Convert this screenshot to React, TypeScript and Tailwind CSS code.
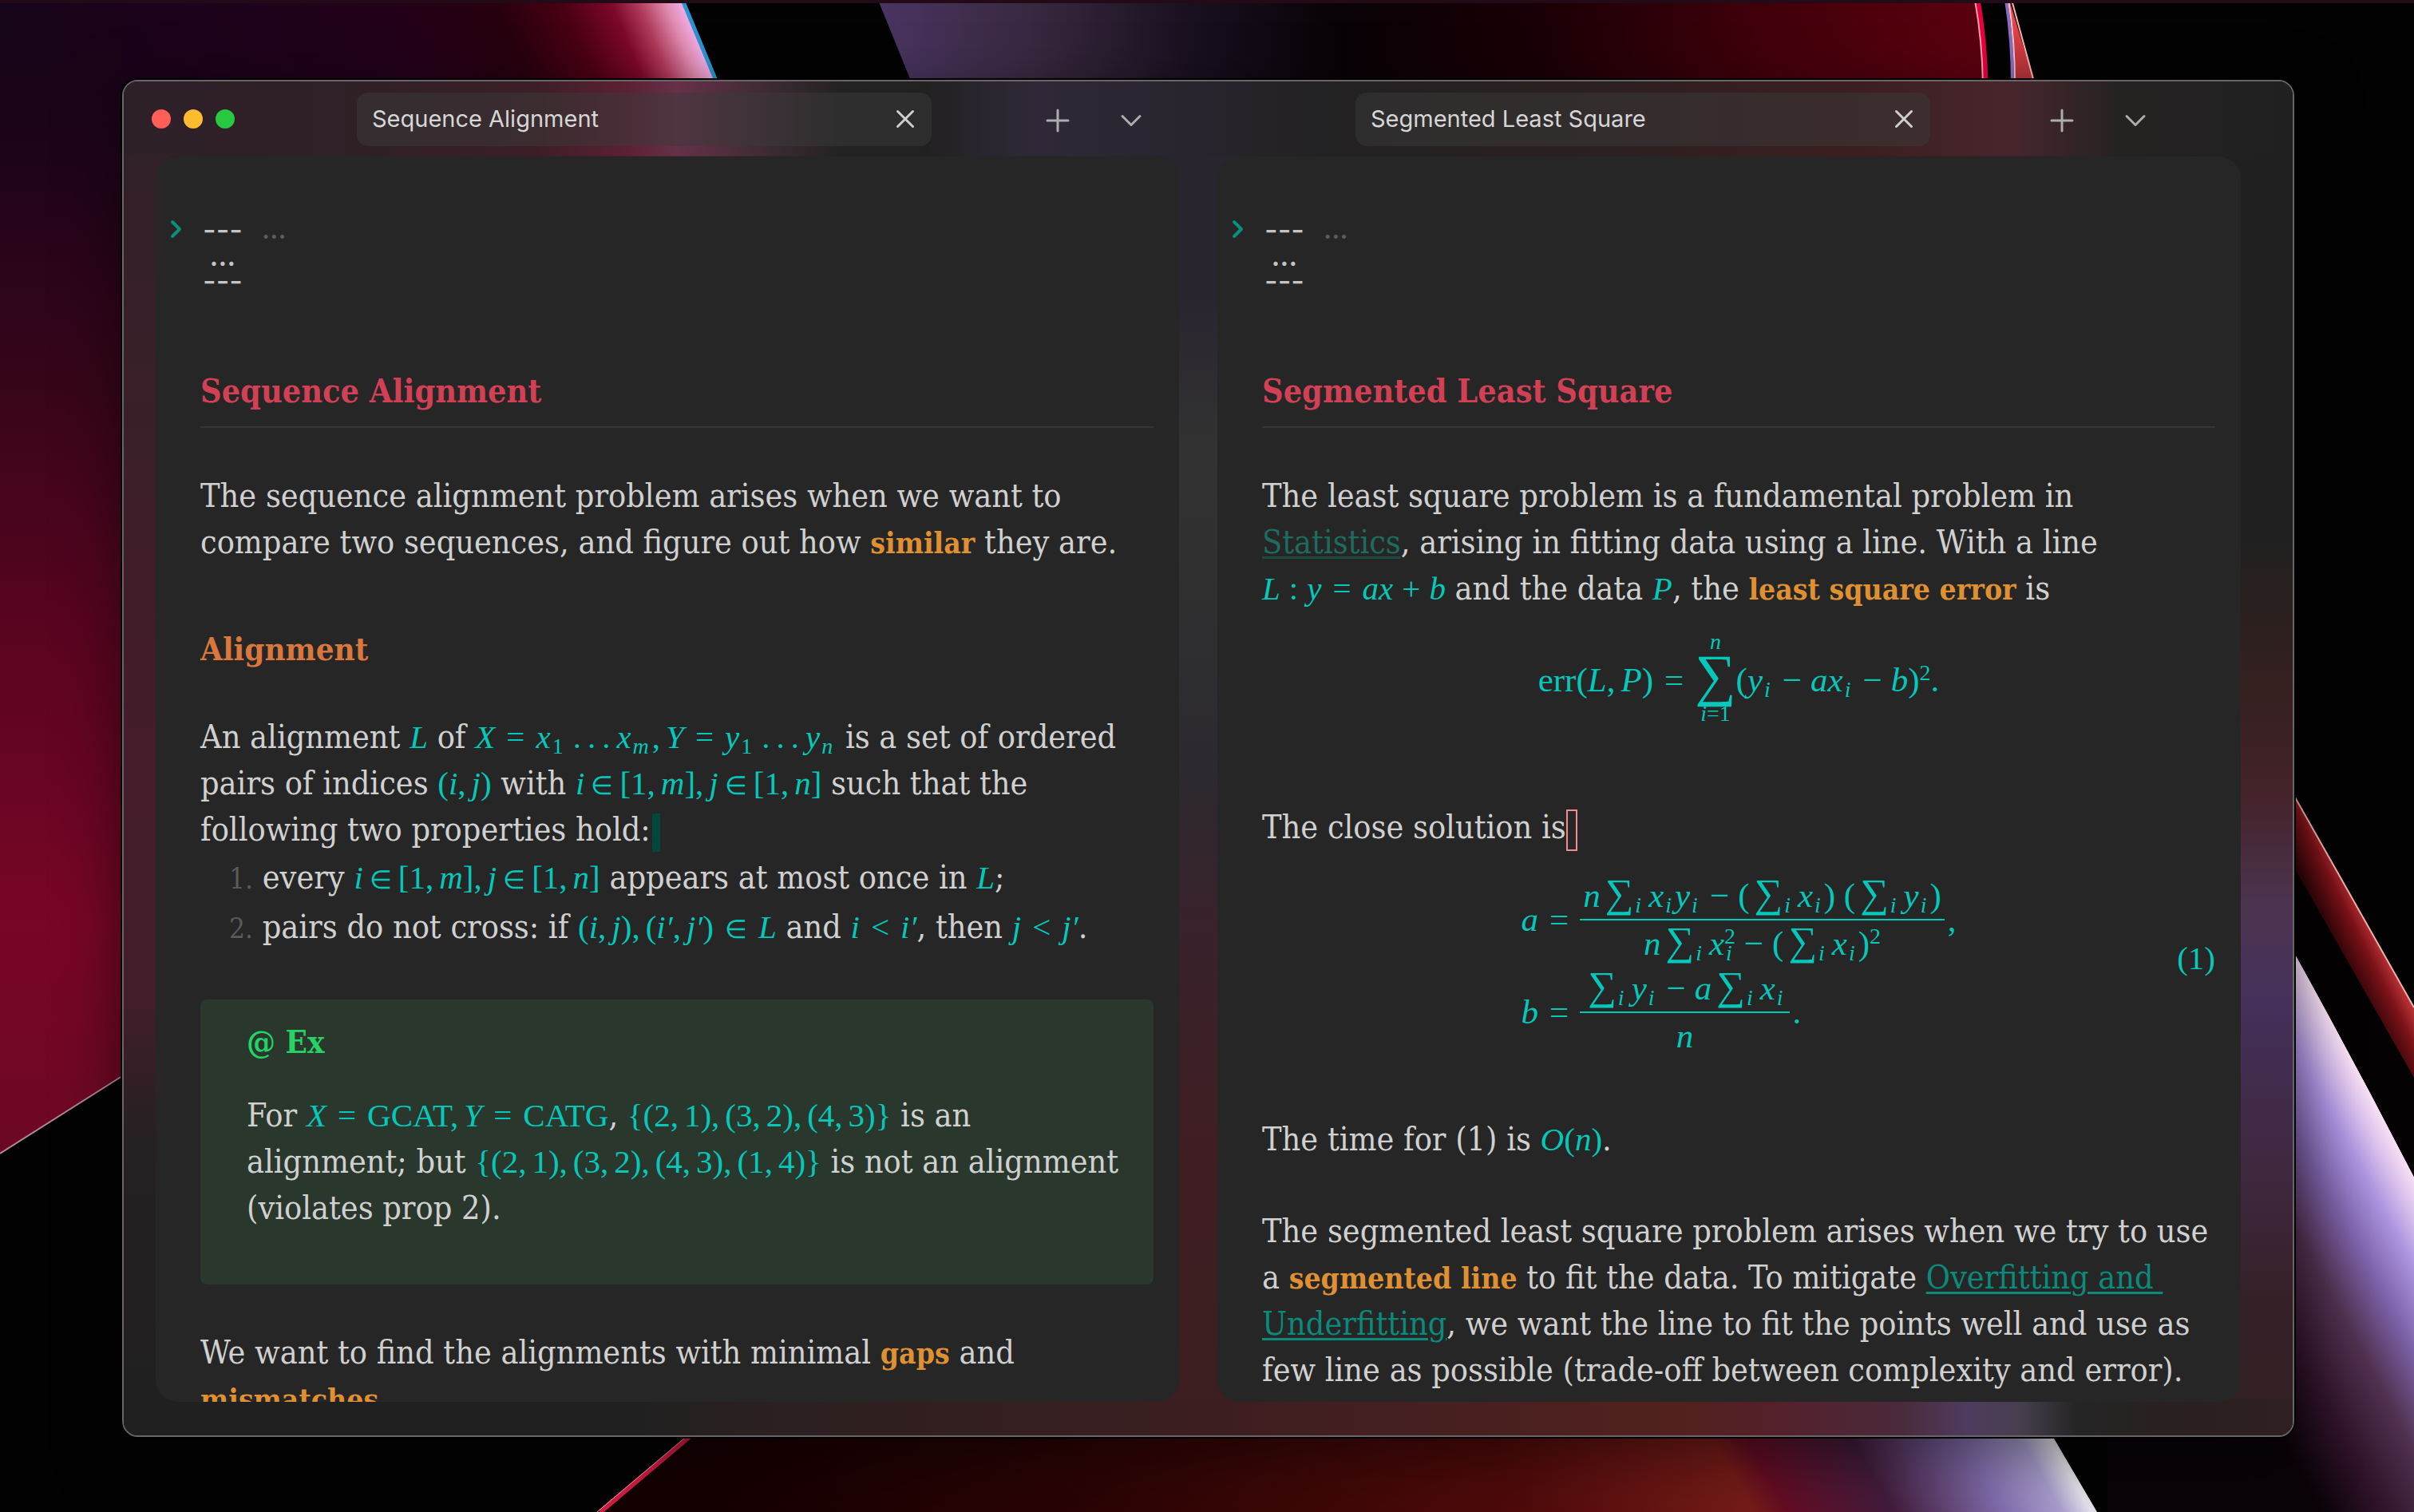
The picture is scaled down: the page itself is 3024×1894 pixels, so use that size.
import type { ReactNode } from "react";

type Children = { children: ReactNode };

/* ---------- desktop wallpaper ---------- */

function Wallpaper() {
  return (
    <svg className="absolute inset-0 h-full w-full" viewBox="0 0 3024 1894" preserveAspectRatio="none" aria-hidden="true">
      <defs>
        <linearGradient id="petal" gradientUnits="userSpaceOnUse" x1="0" y1="0" x2="858" y2="0" gradientTransform="skewX(22.8)">
          <stop offset="0" stopColor="#16041a" />
          <stop offset="0.55" stopColor="#22001a" />
          <stop offset="0.72" stopColor="#26000e" />
          <stop offset="0.82" stopColor="#4a0014" />
          <stop offset="0.89" stopColor="#7c0828" />
          <stop offset="0.93" stopColor="#b03a5c" />
          <stop offset="0.97" stopColor="#e08cb0" />
          <stop offset="1" stopColor="#f4b4f4" />
        </linearGradient>
        <linearGradient id="leftEdge" gradientUnits="userSpaceOnUse" x1="0" y1="0" x2="0" y2="1445">
          <stop offset="0" stopColor="#16040f" stopOpacity="0" />
          <stop offset="0.16" stopColor="#22041a" />
          <stop offset="0.34" stopColor="#38051a" />
          <stop offset="0.55" stopColor="#5a0420" />
          <stop offset="0.8" stopColor="#780626" />
          <stop offset="1" stopColor="#6c0824" />
        </linearGradient>
        <linearGradient id="topSheet" gradientUnits="userSpaceOnUse" x1="1100" y1="0" x2="2484" y2="0">
          <stop offset="0" stopColor="#4a3462" />
          <stop offset="0.14" stopColor="#38283f" />
          <stop offset="0.28" stopColor="#191020" />
          <stop offset="0.42" stopColor="#080206" />
          <stop offset="0.6" stopColor="#1a0006" />
          <stop offset="0.8" stopColor="#40000a" />
          <stop offset="1" stopColor="#5a000e" />
        </linearGradient>
        <linearGradient id="wedge" gradientUnits="userSpaceOnUse" x1="0" y1="0" x2="0" y2="106">
          <stop offset="0" stopColor="#ff4a4a" />
          <stop offset="1" stopColor="#a83038" />
        </linearGradient>
        <linearGradient id="bottomSheet" gradientUnits="userSpaceOnUse" x1="800" y1="0" x2="2560" y2="0" gradientTransform="translate(-1034 0) skewX(30)">
          <stop offset="0" stopColor="#140002" />
          <stop offset="0.3" stopColor="#2c0404" />
          <stop offset="0.6" stopColor="#500a0a" />
          <stop offset="0.76" stopColor="#761c18" />
          <stop offset="0.785" stopColor="#640c24" />
          <stop offset="0.86" stopColor="#421c3c" />
          <stop offset="0.94" stopColor="#8470b0" />
          <stop offset="0.98" stopColor="#aca0d0" />
          <stop offset="1" stopColor="#e8e4ee" />
        </linearGradient>
        <linearGradient id="rightSheet" gradientUnits="userSpaceOnUse" x1="2683" y1="1471" x2="2947" y2="1330">
          <stop offset="0" stopColor="#0a0308" />
          <stop offset="0.22" stopColor="#2e1228" />
          <stop offset="0.46" stopColor="#50304e" />
          <stop offset="0.65" stopColor="#7a60a6" />
          <stop offset="0.82" stopColor="#ac94e0" />
          <stop offset="0.92" stopColor="#d8c0ec" />
          <stop offset="1" stopColor="#f8e0f4" />
        </linearGradient>
        <linearGradient id="redBand" gradientUnits="userSpaceOnUse" x1="2890" y1="1130" x2="2960" y2="1095">
          <stop offset="0" stopColor="#1c0204" />
          <stop offset="0.5" stopColor="#7a1218" />
          <stop offset="0.9" stopColor="#dc4448" />
          <stop offset="1" stopColor="#f49a94" />
        </linearGradient>
      </defs>
      <rect width="3024" height="1894" fill="#020202" />
      <path d="M0 0H855L899 106H153V1348L0 1445Z" fill="url(#petal)" />
      <path d="M0 0H153V1348L0 1445Z" fill="url(#leftEdge)" />
      <path d="M153 1348L0 1445" stroke="#b08a98" strokeWidth="2" />
      <path d="M855 0L899 106" stroke="#2a94d0" strokeWidth="5" />
      <path d="M1100 0H2474Q2483 50 2484 106H1143Z" fill="url(#topSheet)" />
      <path d="M2477 0Q2486 50 2487 106" stroke="#e8003c" strokeWidth="7" fill="none" />
      <path d="M2474 0Q2483 50 2484 106" stroke="#f6a0b4" strokeWidth="2" fill="none" />
      <path d="M2517 0L2549 106H2524Q2524 50 2515 0Z" fill="url(#wedge)" />
      <path d="M2520 0L2549 106" stroke="#f8b4ac" strokeWidth="2" />
      <path d="M2513 0Q2521 50 2521 106" stroke="#8a6cc0" strokeWidth="4" fill="none" />
      <path d="M2516 0Q2524 50 2524 106" stroke="#f0c4d4" strokeWidth="2" fill="none" />
      <path d="M2870 1186Q2950 1330 3024 1474V1894H2640V1790H2870Z" fill="url(#rightSheet)" />
      <path d="M870 1790L750 1894H2627L2566 1790Z" fill="url(#bottomSheet)" />
      <path d="M868 1796L752 1894" stroke="#d81c44" strokeWidth="6" />
      <path d="M864 1796L748 1894" stroke="#f0a0b4" strokeWidth="1" />
      <path d="M2870 990L3024 1262V1380L2870 1100Z" fill="url(#redBand)" />
      <path d="M2870 1080L3024 1350V1474Q2950 1330 2870 1186Z" fill="#040202" />
      <path d="M2870 990L3024 1262" stroke="#f0b0ac" strokeWidth="2" />
      <rect width="3024" height="4" fill="#220a16" />
    </svg>
  );
}

/* Frosted glass of the window frame, seen round the panes. */
function Glass() {
  return (
    <svg className="absolute inset-0 h-full w-full" viewBox="0 0 2720 1700" preserveAspectRatio="none" aria-hidden="true">
      <defs>
        <linearGradient id="glassTop" x1="0" y1="0" x2="1" y2="0">
          <stop offset="0" stopColor="#2e2029" />
          <stop offset="0.12" stopColor="#302026" />
          <stop offset="0.19" stopColor="#3c1e26" />
          <stop offset="0.232" stopColor="#5c2033" />
          <stop offset="0.255" stopColor="#663048" />
          <stop offset="0.29" stopColor="#432c38" />
          <stop offset="0.33" stopColor="#232222" />
          <stop offset="0.37" stopColor="#222122" />
          <stop offset="0.42" stopColor="#302838" />
          <stop offset="0.49" stopColor="#28252e" />
          <stop offset="0.56" stopColor="#222122" />
          <stop offset="0.68" stopColor="#2c2020" />
          <stop offset="0.8" stopColor="#3c1e20" />
          <stop offset="0.87" stopColor="#46262c" />
          <stop offset="0.92" stopColor="#252222" />
          <stop offset="1" stopColor="#202020" />
        </linearGradient>
        <linearGradient id="glassBottom" x1="0" y1="0" x2="1" y2="0">
          <stop offset="0" stopColor="#202020" />
          <stop offset="0.24" stopColor="#212020" />
          <stop offset="0.3" stopColor="#2c2020" />
          <stop offset="0.5" stopColor="#3c1e20" />
          <stop offset="0.72" stopColor="#52211f" />
          <stop offset="0.76" stopColor="#55202a" />
          <stop offset="0.82" stopColor="#4a2a3c" />
          <stop offset="0.85" stopColor="#4e3c5e" />
          <stop offset="0.875" stopColor="#463e4e" />
          <stop offset="0.9" stopColor="#252525" />
          <stop offset="0.95" stopColor="#2a2020" />
          <stop offset="1" stopColor="#302022" />
        </linearGradient>
        <linearGradient id="glassLeft" x1="0" y1="0" x2="0" y2="1">
          <stop offset="0" stopColor="#2e2029" />
          <stop offset="0.25" stopColor="#3a1f28" />
          <stop offset="0.5" stopColor="#451c2a" />
          <stop offset="0.68" stopColor="#421e2a" />
          <stop offset="0.78" stopColor="#252021" />
          <stop offset="1" stopColor="#202020" />
        </linearGradient>
        <linearGradient id="glassMiddle" x1="0" y1="0" x2="0" y2="1">
          <stop offset="0" stopColor="#28252e" />
          <stop offset="0.16" stopColor="#29252f" />
          <stop offset="0.27" stopColor="#323232" />
          <stop offset="0.36" stopColor="#303030" />
          <stop offset="0.5" stopColor="#2c2a30" />
          <stop offset="0.62" stopColor="#38222c" />
          <stop offset="0.78" stopColor="#3e1e22" />
          <stop offset="1" stopColor="#3c1e20" />
        </linearGradient>
        <linearGradient id="glassRight" x1="0" y1="0" x2="0" y2="1">
          <stop offset="0" stopColor="#202020" />
          <stop offset="0.34" stopColor="#212020" />
          <stop offset="0.45" stopColor="#35201f" />
          <stop offset="0.53" stopColor="#44232a" />
          <stop offset="0.61" stopColor="#4c3450" />
          <stop offset="0.68" stopColor="#44305a" />
          <stop offset="0.8" stopColor="#402840" />
          <stop offset="0.9" stopColor="#352028" />
          <stop offset="1" stopColor="#302022" />
        </linearGradient>
      </defs>
      <rect width="2720" height="1700" fill="#202020" />
      <rect width="60" height="1700" fill="url(#glassLeft)" />
      <rect x="1300" width="100" height="1700" fill="url(#glassMiddle)" />
      <rect x="2600" width="120" height="1700" fill="url(#glassRight)" />
      <rect y="1654" width="2720" height="46" fill="url(#glassBottom)" />
      <rect width="2720" height="94" fill="url(#glassTop)" />
    </svg>
  );
}

/* ---------- window chrome ---------- */

function Tab({ title }: { title: string }) {
  return (
    <div className="flex h-[67px] min-w-0 flex-1 items-center justify-between rounded-[14px] bg-[#3a3a3a]/50 pr-3 pl-[19px]">
      <span className="truncate text-[29px] leading-10 text-[#d6d6d6]">{title}</span>
      <button type="button" aria-label={`Close ${title}`} className="flex size-[42px] items-center justify-center text-[#cfcfcf]">
        <svg className="size-6" viewBox="0 0 24 24" fill="none" stroke="currentColor" strokeWidth="3" strokeLinecap="round">
          <path d="M2.500 2.500L21.500 21.500M21.500 2.500L2.500 21.500" />
        </svg>
      </button>
    </div>
  );
}

function TabActions() {
  return (
    <div className="flex items-center gap-[44px] pt-1 text-[#adadad]">
      <button type="button" aria-label="New tab" className="flex size-12 items-center justify-center">
        <svg className="size-[30px]" viewBox="0 0 30 30" fill="none" stroke="currentColor" strokeWidth="3" strokeLinecap="round">
          <path d="M15 2V28M2 15H28" />
        </svg>
      </button>
      <button type="button" aria-label="Tab list" className="flex size-12 items-center justify-center">
        <svg className="h-4 w-7" viewBox="0 0 28 16" fill="none" stroke="currentColor" strokeWidth="3" strokeLinecap="round" strokeLinejoin="round">
          <path d="M3 2.500L14 13.500L25 2.500" />
        </svg>
      </button>
    </div>
  );
}

/* ---------- note building blocks ---------- */

function Fold() {
  return (
    <div className="-ml-[38px] flex h-[190px] items-start">
      <button type="button" aria-label="Unfold properties" className="mt-[7px] mr-[25px] text-[#0a8f7e]">
        <svg className="h-6 w-4" viewBox="0 0 16 24" fill="none" stroke="currentColor" strokeWidth="4" strokeLinecap="round" strokeLinejoin="round">
          <path d="M3 3L12 12L3 21" />
        </svg>
      </button>
      <pre className="mt-1 text-center font-[Inter] text-[36px] leading-8 font-medium text-[#c4c4c4]">{"---\n…\n---"}</pre>
      <span className="mt-1 ml-[24px] font-[Inter] text-[32px] leading-8 font-semibold text-[#5c5c5c]">…</span>
    </div>
  );
}

function Title({ children }: Children) {
  return (
    <h1 className="border-b-2 border-[#363636] pb-[12px] text-[41px] leading-[64px] font-bold text-[#d24055]">{children}</h1>
  );
}

function Strong({ children }: Children) {
  return <strong className="text-[37px] leading-none font-bold text-[#df9033]">{children}</strong>;
}

function M({ children }: Children) {
  return (
    <span className="font-['Liberation_Serif'] text-[41px] leading-none whitespace-nowrap text-[#05c8bb] italic">{children}</span>
  );
}

function DisplayM({ children }: Children) {
  return (
    <div className="font-['Liberation_Serif'] text-[43px] whitespace-nowrap text-[#05c8bb] italic">{children}</div>
  );
}

function Up({ children }: Children) {
  return <span className="not-italic">{children}</span>;
}

function Rel({ children }: Children) {
  return <span className="mx-[14px] not-italic">{children}</span>;
}

function In() {
  return <span className="mx-[8px] text-[32px] not-italic">∈</span>;
}

function Bin({ children }: Children) {
  return <span className="mx-[11px] not-italic">{children}</span>;
}

function Comma() {
  return <span className="mr-[7px] not-italic">,</span>;
}

function Sub({ children }: Children) {
  return <sub className="mr-[4px] ml-[2px] text-[28px] leading-none">{children}</sub>;
}

function Sup({ children }: Children) {
  return <sup className="text-[28px] leading-none not-italic">{children}</sup>;
}

function Dots() {
  return (
    <span className="ml-[8px] not-italic">
      <span className="mr-[8px]">.</span>
      <span className="mr-[8px]">.</span>
      <span className="mr-[8px]">.</span>
    </span>
  );
}

function Sum() {
  return (
    <span className="mr-[5px] ml-[6px] not-italic">
      <span className="text-[50px] leading-none">∑</span>
      <Sub><i>i</i></Sub>
    </span>
  );
}

function Frac({ top, bottom }: { top: ReactNode; bottom: ReactNode }) {
  return (
    <span className="inline-flex flex-col items-stretch text-center">
      <span className="h-[57px] px-1 leading-[55px]">{top}</span>
      <span className="h-[2px] bg-[#05c8bb]" />
      <span className="h-[57px] px-1 leading-[57px]">{bottom}</span>
    </span>
  );
}

/* ---------- notes ---------- */

function SequenceNote() {
  return (
    <>
      <Title>Sequence Alignment</Title>
      <p className="mt-[56px]">
        The sequence alignment problem arises when we want to
        <br />
        compare two sequences, and figure out how <Strong>similar</Strong> they are.
      </p>
      <h2 className="mt-[76px] text-[40px] font-bold text-[#d9773c]">Alignment</h2>
      <p className="mt-[52px] whitespace-nowrap">
        An alignment <M>L</M> of{" "}
        <M>
          X<Rel>=</Rel>x<Sub><Up>1</Up></Sub><Dots />x<Sub>m</Sub><Comma />Y<Rel>=</Rel>y<Sub><Up>1</Up></Sub><Dots />y<Sub>n</Sub>
        </M>{" "}
        is a set of ordered
        <br />
        pairs of indices <M><Up>(</Up>i<Comma />j<Up>)</Up></M> with{" "}
        <M>
          i<In /><Up>[1</Up><Comma />m<Up>]</Up><Comma />j<In /><Up>[1</Up><Comma />n<Up>]</Up>
        </M>{" "}
        such that the
        <br />
        following two properties hold:
        <span className="ml-[2px] inline-block h-12 w-[10px] bg-[#00473e] align-middle" />
      </p>
      <ol className="pl-[36px] leading-[62px] whitespace-nowrap">
        <li>
          <span className="text-[35px] leading-none text-[#5a5a5a]">1.</span> every{" "}
          <M>
            i<In /><Up>[1</Up><Comma />m<Up>]</Up><Comma />j<In /><Up>[1</Up><Comma />n<Up>]</Up>
          </M>{" "}
          appears at most once in <M>L</M>;
        </li>
        <li>
          <span className="text-[35px] leading-none text-[#5a5a5a]">2.</span> pairs do not cross: if{" "}
          <M>
            <Up>(</Up>i<Comma />j<Up>)</Up><Comma /><Up>(</Up>i′<Comma />j′<Up>)</Up><Rel><span className="text-[32px]">∈</span></Rel>L
          </M>{" "}
          and <M>i<Rel>&lt;</Rel>i′</M>, then <M>j<Rel>&lt;</Rel>j′</M>.
        </li>
      </ol>
      <aside className="mt-[60px] rounded-lg bg-[#2a372d] pt-[24px] pb-[67px] pl-[58px]">
        <h3 className="text-[40px] font-bold text-[#25d366]">@ Ex</h3>
        <p className="mt-[34px] whitespace-nowrap">
          For <M>X<Rel>=</Rel><Up>GCAT</Up><Comma />Y<Rel>=</Rel><Up>CATG</Up></M>,{" "}
          <M><Up>{"{"}(2<Comma />1)<Comma />(3<Comma />2)<Comma />(4<Comma />3){"}"}</Up></M> is an
          <br />
          alignment; but <M><Up>{"{"}(2<Comma />1)<Comma />(3<Comma />2)<Comma />(4<Comma />3)<Comma />(1<Comma />4){"}"}</Up></M> is not an alignment
          <br />
          (violates prop 2).
        </p>
      </aside>
      <p className="mt-[56px]">
        We want to find the alignments with minimal <Strong>gaps</Strong> and
        <br />
        <Strong>mismatches</Strong>
      </p>
    </>
  );
}

function LeastSquareNote() {
  return (
    <>
      <Title>Segmented Least Square</Title>
      <p className="mt-[56px] whitespace-nowrap">
        The least square problem is a fundamental problem in
        <br />
        <a href="#statistics" className="text-[#1e6b5f] underline decoration-[#1f4840] decoration-[3px] underline-offset-4">Statistics</a>, arising in fitting data using a line. With a line
        <br />
        <M>L<Bin>:</Bin>y<Rel>=</Rel>ax<Bin>+</Bin>b</M> and the data <M>P</M>, the <Strong>least square error</Strong> is
      </p>
      <div className="mt-[24px] flex h-[124px] items-center justify-center">
        <DisplayM>
          <span className="flex items-center leading-[58px]">
            <span><Up>err(</Up>L<Comma />P<Up>)</Up><Rel>=</Rel></span>
            <span className="flex flex-col items-center">
              <span className="text-[28px] leading-7">n</span>
              <span className="text-[72px] leading-[56px] not-italic">∑</span>
              <span className="text-[28px] leading-10">i<Up>=1</Up></span>
            </span>
            <span>
              <Up>(</Up>y<Sub>i</Sub><Bin>−</Bin>ax<Sub>i</Sub><Bin>−</Bin>b<Up>)<Sup>2</Sup>.</Up>
            </span>
          </span>
        </DisplayM>
      </div>
      <p className="mt-[93px]">
        The close solution is
        <span className="inline-block h-[52px] w-[14px] border-2 border-[#f08c8c] align-middle" />
      </p>
      <div className="mt-[28px] grid grid-cols-[1fr_auto_1fr] items-center">
        <span />
        <DisplayM>
          <span className="grid grid-cols-[auto_auto_1fr] items-center">
            <span className="text-right">a</span>
            <Rel>=</Rel>
            <span className="flex items-center">
              <Frac
                top={<>n<Sum />x<Sub>i</Sub>y<Sub>i</Sub><Bin>−</Bin><Up>(</Up><Sum />x<Sub>i</Sub><Up>) (</Up><Sum />y<Sub>i</Sub><Up>)</Up></>}
                bottom={<>n<Sum />x<Sup>2</Sup><span className="-ml-[14px]"><Sub>i</Sub></span><Bin>−</Bin><Up>(</Up><Sum />x<Sub>i</Sub><Up>)</Up><Sup>2</Sup></>}
              />
              <span className="ml-1 not-italic">,</span>
            </span>
            <span className="text-right">b</span>
            <Rel>=</Rel>
            <span className="flex items-center">
              <Frac top={<><Sum />y<Sub>i</Sub><Bin>−</Bin>a<Sum />x<Sub>i</Sub></>} bottom="n" />
              <span className="ml-1 not-italic">.</span>
            </span>
          </span>
        </DisplayM>
        <span className="pb-5 text-right"><M><Up>(1)</Up></M></span>
      </div>
      <p className="mt-[72px]">
        The time for (1) is <M>O<Up>(</Up>n<Up>)</Up></M>.
      </p>
      <p className="mt-[57px] whitespace-nowrap">
        The segmented least square problem arises when we try to use
        <br />
        a <Strong>segmented line</Strong> to fit the data. To mitigate{" "}
        <a href="#overfitting" className="text-[#0a8a7a] underline decoration-[3px] underline-offset-4">
          Overfitting and&nbsp;
          <br />
          Underfitting
        </a>
        , we want the line to fit the points well and use as
        <br />
        few line as possible (trade-off between complexity and error).
      </p>
    </>
  );
}

function Pane({ children }: Children) {
  return (
    <article className="min-w-0 flex-1 overflow-hidden rounded-[28px] bg-[#262626] pt-[72px] pr-8 pl-14 font-['DejaVu_Serif_Condensed','DejaVu_Serif',serif] text-[41px] leading-[58px] text-[#d0d0d0]">
      <Fold />
      {children}
    </article>
  );
}

export default function App() {
  return (
    <main className="relative h-screen w-full overflow-hidden bg-black pt-[100px] pr-[150px] pb-[94px] pl-[153px] font-[Inter,sans-serif]">
      <Wallpaper />
      <div className="relative flex h-full flex-col overflow-hidden rounded-[20px] border-2 border-[#6a6468] shadow-[0_0_0_2px_#000,0_24px_80px_rgba(0,0,0,0.5)]">
        <Glass />
        <header className="relative flex h-[94px] shrink-0 items-center pr-[173px] pl-[35px]">
          <div className="mr-[153px] flex gap-4">
            <button type="button" aria-label="Close window" className="size-6 rounded-full bg-[#ff5f57]" />
            <button type="button" aria-label="Minimise window" className="size-6 rounded-full bg-[#febc2e]" />
            <button type="button" aria-label="Zoom window" className="size-6 rounded-full bg-[#28c840]" />
          </div>
          <Tab title="Sequence Alignment" />
          <div className="mr-[257px] ml-[134px]">
            <TabActions />
          </div>
          <Tab title="Segmented Least Square" />
          <div className="ml-[141px]">
            <TabActions />
          </div>
        </header>
        <div className="relative mr-[65px] mb-[42px] ml-[40px] flex min-h-0 flex-1 gap-12">
          <Pane><SequenceNote /></Pane>
          <Pane><LeastSquareNote /></Pane>
        </div>
      </div>
    </main>
  );
}
